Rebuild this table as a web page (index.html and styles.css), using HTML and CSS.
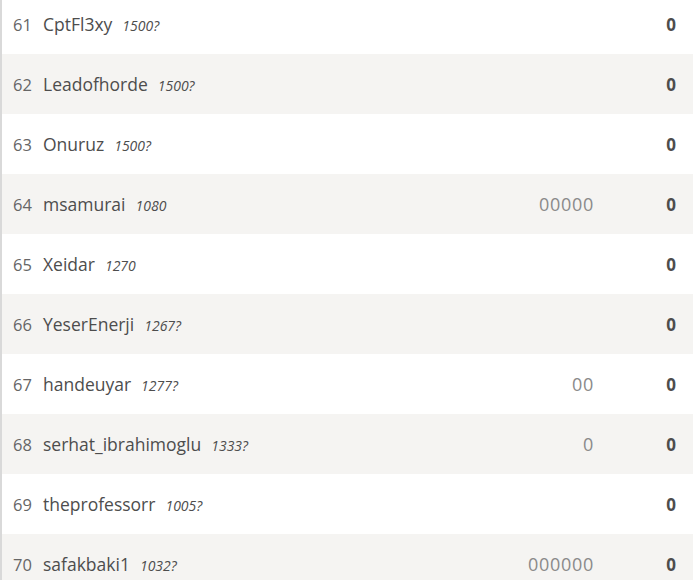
FILE: index.html
```html
<!DOCTYPE html>
<html>
<head>
<meta charset="utf-8">
<link rel="stylesheet" href="styles.css">
</head>
<body>
<table class="standing">
<tbody>
<tr><td class="rank">61</td><td class="player"><span class="name">CptFl3xy</span><em class="rating">1500?</em></td><td class="sheet"></td><td class="total">0</td></tr>
<tr><td class="rank">62</td><td class="player"><span class="name">Leadofhorde</span><em class="rating">1500?</em></td><td class="sheet"></td><td class="total">0</td></tr>
<tr><td class="rank">63</td><td class="player"><span class="name">Onuruz</span><em class="rating">1500?</em></td><td class="sheet"></td><td class="total">0</td></tr>
<tr><td class="rank">64</td><td class="player"><span class="name">msamurai</span><em class="rating">1080</em></td><td class="sheet">00000</td><td class="total">0</td></tr>
<tr><td class="rank">65</td><td class="player"><span class="name">Xeidar</span><em class="rating">1270</em></td><td class="sheet"></td><td class="total">0</td></tr>
<tr><td class="rank">66</td><td class="player"><span class="name">YeserEnerji</span><em class="rating">1267?</em></td><td class="sheet"></td><td class="total">0</td></tr>
<tr><td class="rank">67</td><td class="player"><span class="name">handeuyar</span><em class="rating">1277?</em></td><td class="sheet">00</td><td class="total">0</td></tr>
<tr><td class="rank">68</td><td class="player"><span class="name">serhat_ibrahimoglu</span><em class="rating">1333?</em></td><td class="sheet">0</td><td class="total">0</td></tr>
<tr><td class="rank">69</td><td class="player"><span class="name">theprofessorr</span><em class="rating">1005?</em></td><td class="sheet"></td><td class="total">0</td></tr>
<tr><td class="rank">70</td><td class="player"><span class="name">safakbaki1</span><em class="rating">1032?</em></td><td class="sheet">000000</td><td class="total">0</td></tr>
</tbody>
</table>
</body>
</html>
```
FILE: styles.css
```css
html, body {
  margin: 0;
  padding: 0;
  background: #fff;
}
body {
  font-family: "Open Sans", "Noto Sans", sans-serif;
  color: #4d4d4d;
  overflow: hidden;
}
.standing {
  width: 100%;
  border-collapse: collapse;
  margin-top: -6px;
  border-left: 2px solid #d9d9d9;
}
.standing tr {
  height: 60px;
}
.standing tr:nth-child(even) {
  background: #f5f4f2;
}
.standing td {
  padding: 0;
    vertical-align: middle;
}
.rank {
  width: 19px;
  padding-left: 11px !important;
  font-size: 16.5px;
  color: #666;
  white-space: nowrap;
}
.player {
  font-size: 17.5px;
  white-space: nowrap;
  padding-left: 11px !important;
}
.name {
  color: #4d4d4d;
}
.rating {
  font-size: 14px;
  font-style: italic;
  margin-left: 10px;
  color: #4d4d4d;
}
.sheet {
  text-align: right;
  font-size: 18px;
  letter-spacing: 0.7px;
  color: #8a8a8a;
  padding-right: 42px !important;
}
.total {
  width: 40px;
  text-align: right;
  font-weight: bold;
  font-size: 17px;
  padding-right: 17px !important;
  color: #4d4d4d;
}
```
